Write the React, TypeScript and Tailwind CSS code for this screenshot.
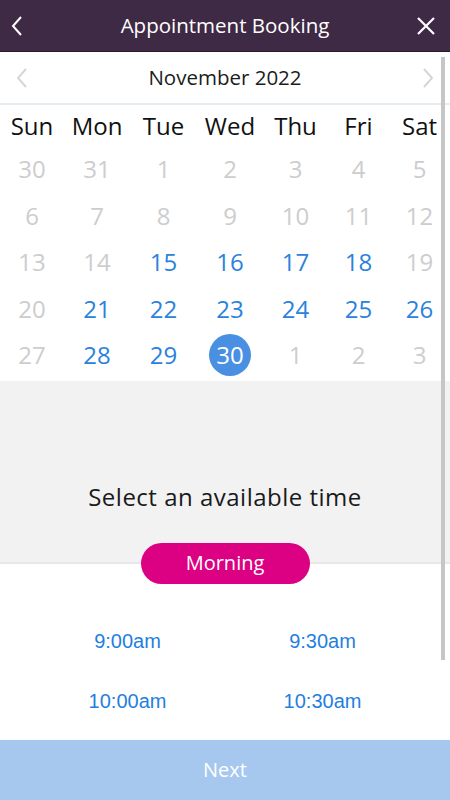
const weekDays = ["Sun", "Mon", "Tue", "Wed", "Thu", "Fri", "Sat"];

type Day = { n: number; state: "off" | "open" | "selected" };

const off = (n: number): Day => ({ n, state: "off" });
const open = (n: number): Day => ({ n, state: "open" });

const weeks: Day[][] = [
  [off(30), off(31), off(1), off(2), off(3), off(4), off(5)],
  [off(6), off(7), off(8), off(9), off(10), off(11), off(12)],
  [off(13), off(14), open(15), open(16), open(17), open(18), off(19)],
  [off(20), open(21), open(22), open(23), open(24), open(25), open(26)],
  [off(27), open(28), open(29), { n: 30, state: "selected" }, off(1), off(2), off(3)],
];

const slots = ["9:00am", "9:30am", "10:00am", "10:30am"];

const cols = "grid grid-cols-[64px_66px_67px_66px_65px_61px_61px]";

function Chevron({ dir, className }: { dir: "left" | "right"; className?: string }) {
  return (
    <svg width="14" height="22" viewBox="0 0 14 22" className={className} fill="none">
      <path
        d={dir === "left" ? "M11 2 L3 11 L11 20" : "M3 2 L11 11 L3 20"}
        stroke="currentColor"
        strokeWidth="2"
      />
    </svg>
  );
}

export default function App() {
  return (
    <div className="relative h-[800px] w-[450px] overflow-hidden flex flex-col bg-white font-['Open_Sans',sans-serif]">
      {/* header */}
      <div className="h-[52px] shrink-0 grid grid-cols-[50px_1fr_50px] items-center px-[10px] bg-[#3f2a46] border-b border-[#261b2b] text-white">
        <Chevron dir="left" className="text-white" />
        <div className="text-[20.5px] leading-none text-center">Appointment Booking</div>
        <svg width="20" height="20" viewBox="0 0 20 20" className="justify-self-end mr-[4px]">
          <path d="M2 2 L18 18 M18 2 L2 18" stroke="white" strokeWidth="2.2" />
        </svg>
      </div>

      <div className="flex-1 overflow-hidden">
        {/* month */}
        <div className="h-[53px] flex items-center justify-between px-[15px] border-b-2 border-[#e6ebef]">
          <Chevron dir="left" className="text-[#d6d6d6]" />
          <div className="text-[20.5px] text-[#1c1c1c]">November 2022</div>
          <Chevron dir="right" className="text-[#d6d6d6]" />
        </div>

        {/* weekdays */}
        <div className={`${cols} h-[41px] items-center text-[24px] text-[#111]`}>
          {weekDays.map((d) => (
            <div key={d} className="text-center leading-none">{d}</div>
          ))}
        </div>

        {/* dates */}
        {weeks.map((week, i) => (
          <div key={i} className={`${cols} h-[46.5px] items-center text-[24px]`}>
            {week.map((day, j) => (
              <div key={j} className="flex justify-center">
                {day.state === "selected" ? (
                  <div className="w-[42px] h-[42px] rounded-full bg-[#4a90e2] text-white flex items-center justify-center leading-none">
                    {day.n}
                  </div>
                ) : (
                  <span className={`leading-none ${day.state === "open" ? "text-[#2a82dc]" : "text-[#cdcdcd]"}`}>
                    {day.n}
                  </span>
                )}
              </div>
            ))}
          </div>
        ))}

        {/* time picker */}
        <div className="mt-[2px] h-[183px] bg-[#f2f2f2] border-b-2 border-[#e6e9ec] flex flex-col items-center">
          <div className="mt-[100px] text-[24px] leading-[32px] tracking-[0.5px] text-[#1a1a1a]">
            Select an available time
          </div>
        </div>
        <div className="flex justify-center -mt-[21px] relative">
          <div className="w-[169px] h-[41px] rounded-full bg-[#dc0083] text-white text-[20px] flex items-center justify-center">
            Morning
          </div>
        </div>

        <div className="grid grid-cols-2 px-[30px] pt-[27px] font-['Liberation_Sans',Arial,sans-serif] text-[20px] text-[#1f80e0]">
          {slots.map((s) => (
            <div key={s} className="h-[60px] flex items-center justify-center">{s}</div>
          ))}
        </div>
      </div>

      {/* next */}
      <div className="h-[60px] shrink-0 bg-[#a6c8ef] text-white text-[20px] flex items-center justify-center">
        Next
      </div>

      {/* scrollbar */}
      <div className="absolute right-[5px] top-[57px] w-[4px] h-[603px] bg-[#c6c6c6]" />
    </div>
  );
}
